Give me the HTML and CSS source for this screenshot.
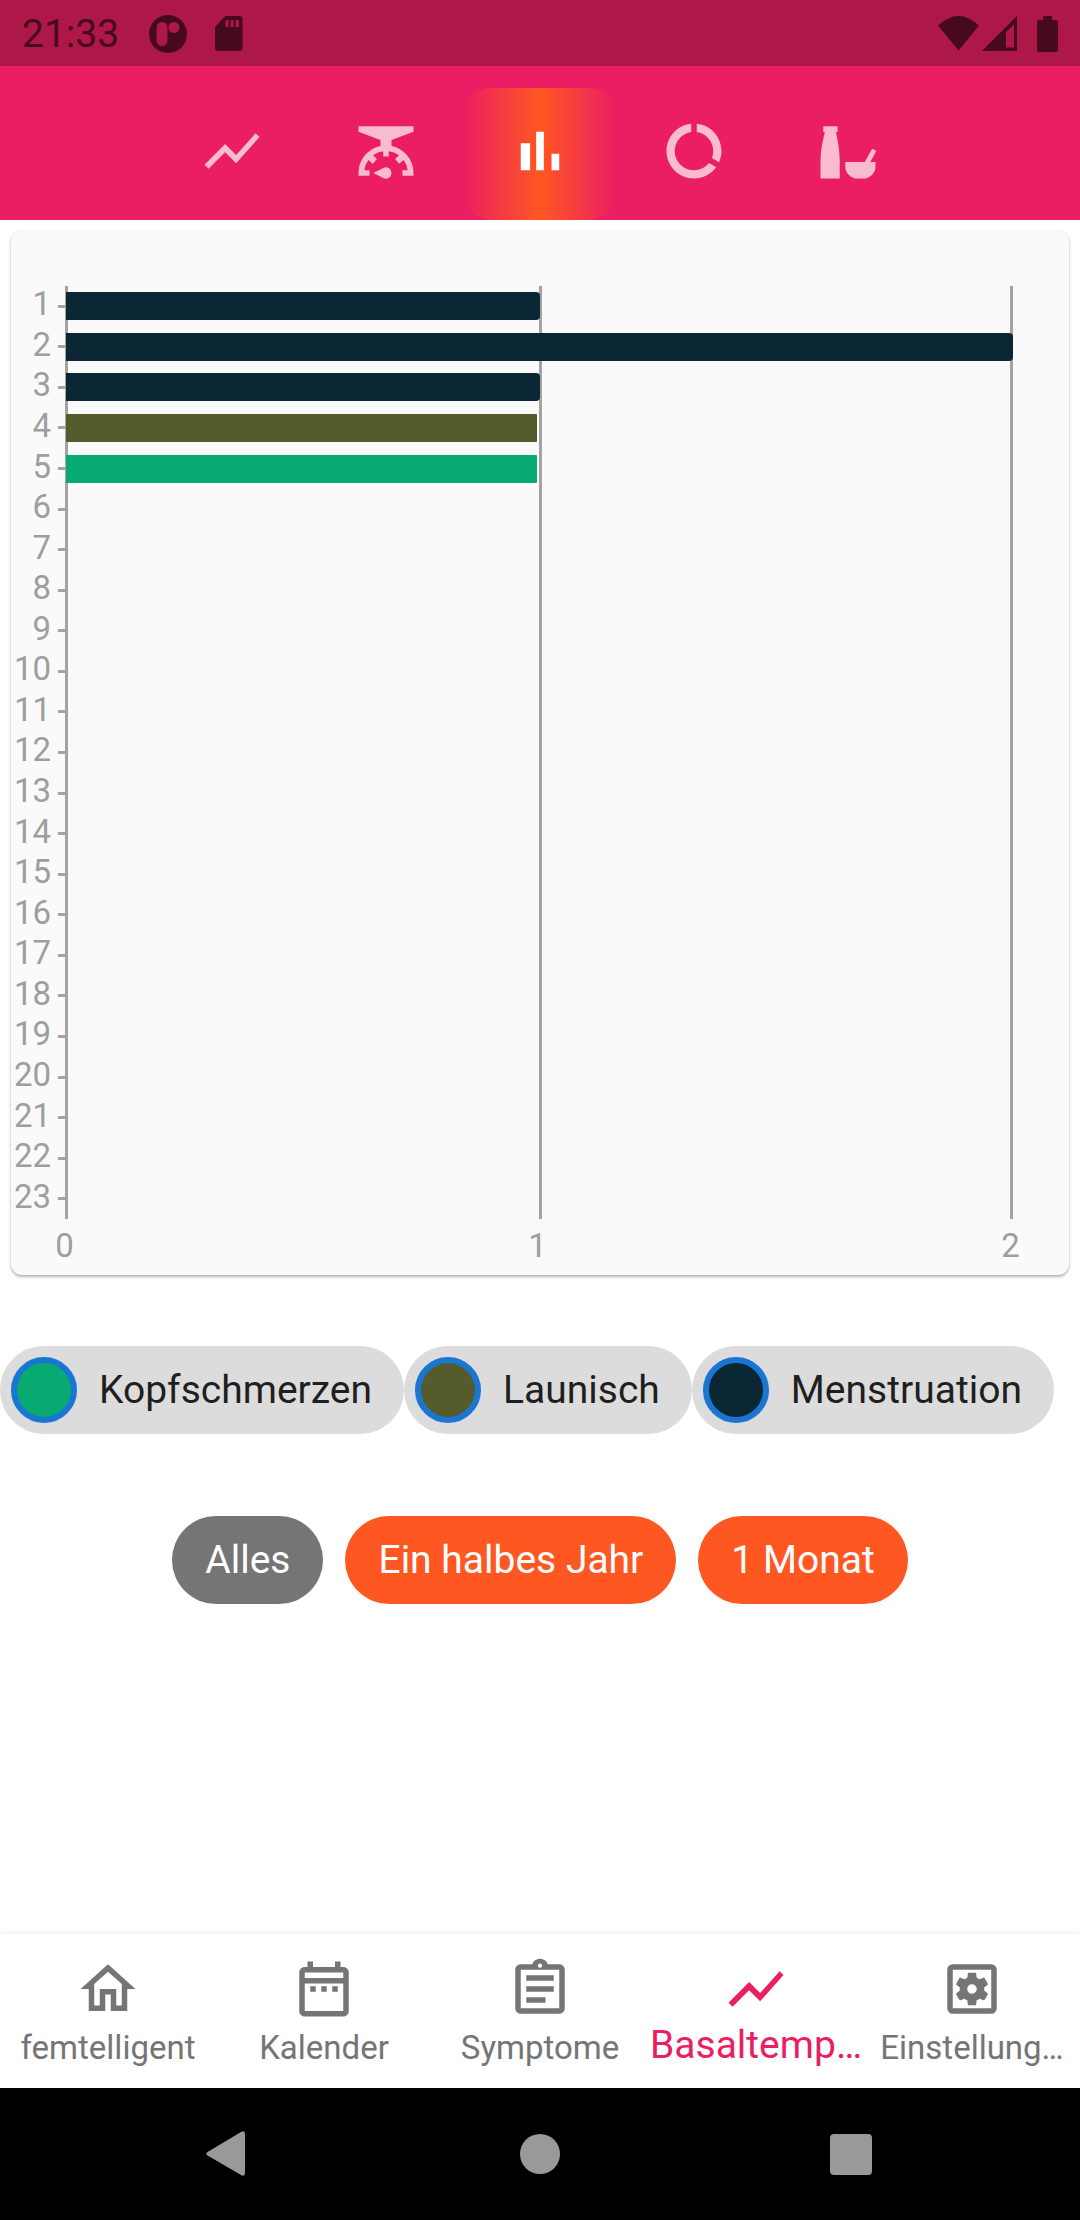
FILE: index.html
```html
<!DOCTYPE html>
<html lang="de">
<head>
<meta charset="utf-8">
<meta name="viewport" content="width=device-width, initial-scale=1">
<title>femtelligent</title>
<link rel="stylesheet" href="styles.css">
</head>
<body>
<div class="status">
  <span class="status-time">21:33</span>
  <svg class="status-app" viewBox="0 0 38 38" aria-hidden="true"><path fill-rule="evenodd" d="M19 0a19 19 0 1 0 0 38a19 19 0 0 0 0-38zM13 7a5.5 5.5 0 0 1 5.500 5.500v13a5.500 5.500 0 0 1-11 0v-13a5.500 5.500 0 0 1 5.500-5.500zM25 7a5.500 5.500 0 1 1 0 11a5.500 5.500 0 0 1 0-11z"/></svg>
  <svg class="status-sd" viewBox="0 0 28 35" aria-hidden="true"><path fill-rule="evenodd" d="M10.500 0H24.500a3 3 0 0 1 3 3V32a3 3 0 0 1-3 3H3a3 3 0 0 1-3-3V11zM10.500 4v7h3V4zm5 0v7h3V4zm5 0v7h3.500V4z"/></svg>
  <svg class="status-system" viewBox="0 0 120 36" aria-hidden="true">
    <path d="M0 9.500Q20.500-9.500 41 9.500L20.500 34.500z"/>
    <path fill-rule="evenodd" d="M79 0V35H44zM76 8.500L68 16V31.500H76z"/>
    <path d="M105 0h9v4h4a2 2 0 0 1 2 2V34a2 2 0 0 1-2 2H101a2 2 0 0 1-2-2V6a2 2 0 0 1 2-2h4z"/>
  </svg>
</div>
<header class="toolbar">
  <div class="tabs" role="tablist">
    <button class="tab" role="tab" aria-label="Verlauf"><svg class="icon" viewBox="0 0 24 24"><path d="M3.500 18.490l6-6.010 4 4L22 6.920l-1.410-1.410-7.090 7.970-4-4L2 16.990z"/></svg></button>
    <button class="tab" role="tab" aria-label="Gewicht"><svg class="icon" viewBox="0 0 24 24"><path d="M2 3h20v2l-8 3v2.200A10 10 0 0 1 22 20v1h-4v-2h1.900a8 8 0 0 0-1.500-3.700l-1.600 1.300-1.500-1.700 1.400-1.400A8 8 0 0 0 13 12.100V14h-2v-1.900a8 8 0 0 0-3.700 1.400l1.400 1.400-1.500 1.700-1.600-1.300A8 8 0 0 0 4.100 19H6v2H2v-1A10 10 0 0 1 10 10.200V8L2 5z"/><path d="M7.400 20l3.800-1.900a2.050 2.050 0 1 1 0 3.800z"/></svg></button>
    <button class="tab tab-active" role="tab" aria-selected="true" aria-label="Statistik"><svg class="icon" viewBox="0 0 24 24"><path d="M5 9.200h3.400V19H5zM10.600 5h2.800v14h-2.800zM16.200 13H19v6h-2.800z"/></svg></button>
    <button class="tab" role="tab" aria-label="Anteile"><svg class="icon" viewBox="0 0 24 24"><path d="M13 2.050v3.030c3.390.49 6 3.390 6 6.920 0 .9-.18 1.750-.48 2.540l2.600 1.530c.56-1.240.88-2.620.88-4.070 0-5.180-3.950-9.450-9-9.950zM12 19c-3.870 0-7-3.130-7-7 0-3.530 2.610-6.430 6-6.920V2.050c-5.060.5-9 4.760-9 9.950 0 5.520 4.470 10 9.990 10 3.310 0 6.240-1.610 8.060-4.090l-2.600-1.530C16.170 17.980 14.210 19 12 19z"/></svg></button>
    <button class="tab" role="tab" aria-label="Ernährung"><svg class="icon" viewBox="0 0 24 24"><path d="M3 3h5.200v2.100h-.6Q9 11 9 16v6H2v-6Q2 11 3.600 5.100H3zM11 16h7.100l2.700-4.800 1.500.8-2.200 4H22v1.500a4.500 4.500 0 0 1-4.500 4.500h-2A4.500 4.500 0 0 1 11 17.500z"/></svg></button>
  </div>
</header>
<main class="content">
  <section class="card" aria-label="Symptome pro Zyklustag">
    <div class="plot">
      <div class="gridlines" aria-hidden="true"><span></span><span></span></div>
      <ol class="rows">
        <li class="row"><span class="day">1</span><span class="track"><span class="bar bar-menstruation" style="width:50%"></span></span></li>
        <li class="row"><span class="day">2</span><span class="track"><span class="bar bar-menstruation" style="width:100%"></span></span></li>
        <li class="row"><span class="day">3</span><span class="track"><span class="bar bar-menstruation" style="width:50%"></span></span></li>
        <li class="row"><span class="day">4</span><span class="track"><span class="bar bar-launisch" style="width:49.700%"></span></span></li>
        <li class="row"><span class="day">5</span><span class="track"><span class="bar bar-kopfschmerzen" style="width:49.700%"></span></span></li>
        <li class="row"><span class="day">6</span></li>
        <li class="row"><span class="day">7</span></li>
        <li class="row"><span class="day">8</span></li>
        <li class="row"><span class="day">9</span></li>
        <li class="row"><span class="day">10</span></li>
        <li class="row"><span class="day">11</span></li>
        <li class="row"><span class="day">12</span></li>
        <li class="row"><span class="day">13</span></li>
        <li class="row"><span class="day">14</span></li>
        <li class="row"><span class="day">15</span></li>
        <li class="row"><span class="day">16</span></li>
        <li class="row"><span class="day">17</span></li>
        <li class="row"><span class="day">18</span></li>
        <li class="row"><span class="day">19</span></li>
        <li class="row"><span class="day">20</span></li>
        <li class="row"><span class="day">21</span></li>
        <li class="row"><span class="day">22</span></li>
        <li class="row"><span class="day">23</span></li>
      </ol>
    </div>
    <div class="scale"><span>0</span><span>1</span><span>2</span></div>
  </section>
  <ul class="legend">
    <li class="chip"><span class="dot bar-kopfschmerzen"></span>Kopfschmerzen</li>
    <li class="chip"><span class="dot bar-launisch"></span>Launisch</li>
    <li class="chip"><span class="dot bar-menstruation"></span>Menstruation</li>
  </ul>
  <div class="periods">
    <button class="period period-active" aria-pressed="true">Alles</button>
    <button class="period">Ein halbes Jahr</button>
    <button class="period">1 Monat</button>
  </div>
</main>
<nav class="bottom-nav">
  <a class="nav-item" href="#home"><svg class="icon" viewBox="0 0 24 24" aria-hidden="true"><path d="M12 5.690l5 4.500V18h-2v-6H9v6H7v-7.810l5-4.500M12 3L2 12h3v8h6v-6h2v6h6v-8h3L12 3z"/></svg><span class="nav-label">femtelligent</span></a>
  <a class="nav-item" href="#kalender"><svg class="icon" viewBox="0 0 24 24" aria-hidden="true"><path d="M7 11h2v2H7v-2zm14-5v14c0 1.100-.9 2-2 2H5c-1.110 0-2-.9-2-2l.01-14c0-1.100.88-2 1.990-2h1V2h2v2h8V2h2v2h1c1.100 0 2 .9 2 2zM5 8h14V6H5v2zm14 12V10H5v10h14zm-4-7h2v-2h-2v2zm-4 0h2v-2h-2v2z"/></svg><span class="nav-label">Kalender</span></a>
  <a class="nav-item" href="#symptome"><svg class="icon" viewBox="0 0 24 24" aria-hidden="true"><path d="M7 15h7v2H7zm0-4h10v2H7zm0-4h10v2H7zm12-4h-4.180C14.400 1.840 13.300 1 12 1c-1.300 0-2.400.84-2.820 2H5c-1.100 0-2 .9-2 2v14c0 1.100.9 2 2 2h14c1.100 0 2-.9 2-2V5c0-1.100-.9-2-2-2zm-7-.25c.41 0 .75.34.75.75s-.34.75-.75.75-.75-.34-.75-.75.34-.75.75-.75zM19 19H5V5h14v14z"/></svg><span class="nav-label">Symptome</span></a>
  <a class="nav-item nav-active" href="#basaltemperatur" aria-current="page"><svg class="icon" viewBox="0 0 24 24" aria-hidden="true"><path d="M3.500 18.490l6-6.010 4 4L22 6.920l-1.410-1.410-7.090 7.970-4-4L2 16.990z"/></svg><span class="nav-label">Basaltemp…</span></a>
  <a class="nav-item" href="#einstellungen"><svg class="icon" viewBox="0 0 24 24" aria-hidden="true"><path fill-rule="evenodd" d="M5 3h14a2 2 0 0 1 2 2v14a2 2 0 0 1-2 2H5a2 2 0 0 1-2-2V5a2 2 0 0 1 2-2zM5 5v14h14V5z"/><path fill-rule="evenodd" transform="translate(4.560 4.560) scale(.62)" d="M19.140 12.940c.04-.3.060-.61.060-.94 0-.32-.02-.64-.07-.94l2.030-1.580c.18-.14.23-.41.12-.61l-1.920-3.320c-.12-.22-.37-.29-.59-.22l-2.390.96c-.5-.38-1.030-.7-1.620-.94l-.36-2.540c-.04-.24-.24-.41-.48-.41h-3.840c-.24 0-.43.17-.47.41l-.36 2.540c-.59.24-1.130.57-1.620.94l-2.390-.96c-.22-.08-.47 0-.59.22L2.740 8.870c-.12.21-.08.47.12.61l2.030 1.580c-.05.3-.09.63-.09.94s.02.64.07.94l-2.030 1.580c-.18.14-.23.41-.12.61l1.920 3.320c.12.22.37.29.59.22l2.390-.96c.5.38 1.030.7 1.620.94l.36 2.540c.05.24.24.41.48.41h3.840c.24 0 .44-.17.47-.41l.36-2.540c.59-.24 1.130-.56 1.620-.94l2.390.96c.22.08.47 0 .59-.22l1.920-3.320c.12-.22.07-.47-.12-.61l-2.010-1.580zM12 14.800a2.800 2.800 0 1 1 0-5.600 2.800 2.800 0 0 1 0 5.600z"/></svg><span class="nav-label">Einstellung…</span></a>
</nav>
<div class="system-nav">
  <button class="system-key" aria-label="Zurück"><svg viewBox="0 0 60 60"><path d="M7.500 28L41 8Q45 6 45 10V49Q45 53 41 51L7.500 31.500Q5 29.800 7.500 28z"/></svg></button>
  <button class="system-key" aria-label="Startbildschirm"><svg viewBox="0 0 60 60"><circle cx="30" cy="30" r="20"/></svg></button>
  <button class="system-key" aria-label="Übersicht"><svg viewBox="0 0 60 60"><rect x="10" y="10" width="42" height="41" rx="4"/></svg></button>
</div>
</body>
</html>
```
FILE: styles.css
```css
* {
  box-sizing: border-box;
}

body {
  margin: 0;
  min-height: 100vh;
  display: flex;
  flex-direction: column;
  background: #fff;
  font-family: Roboto, "Noto Sans", sans-serif;
}

button {
  border: 0;
  margin: 0;
  font: inherit;
  cursor: pointer;
}

ol,
ul {
  list-style: none;
  margin: 0;
  padding: 0;
}

svg {
  display: block;
  fill: currentColor;
}

.icon {
  width: 66px;
  height: 66px;
}

/* status bar */
.status {
  display: flex;
  align-items: center;
  height: 66px;
  padding: 1px 22px 0;
  background: #ad1848;
  color: #46091d;
}

.status-time {
  font-size: 39px;
  line-height: 46px;
}

.status-app {
  width: 38px;
  height: 38px;
  margin-left: 30px;
}

.status-sd {
  width: 28px;
  height: 35px;
  margin-left: 28px;
}

.status-system {
  width: 120px;
  height: 36px;
  margin-left: auto;
}

/* tab bar */
.toolbar {
  padding-top: 22px;
  background: #eb1e63;
}

.tabs {
  display: flex;
  justify-content: center;
}

.tab {
  padding: 30px 44px 36px;
  background: none;
  color: #f9bbd0;
}

.tab-active {
  border-radius: 28px;
  background: linear-gradient(90deg, #eb1e63, #ff5722, #eb1e63);
  color: #fff;
}

/* chart */
.content {
  flex: 1;
}

.card {
  margin: 11px;
  padding: 55px 56px 11px 0;
  border-radius: 11px;
  background: #fafafa;
  box-shadow: 0 2px 3px rgba(0, 0, 0, 0.28), 0 0 2px rgba(0, 0, 0, 0.12);
  color: #9e9e9e;
  font-size: 33px;
  line-height: 36px;
}

.plot {
  display: grid;
  grid-template-columns: 54px 1fr;
  height: 933px;
}

.gridlines {
  grid-area: 1 / 2;
  display: grid;
  grid-template-columns: 1fr 1fr;
}

.gridlines span {
  border-left: 3px solid #a3a3a3;
}

.gridlines span:last-child {
  border-right: 3px solid #a3a3a3;
}

.rows {
  grid-area: 1 / 1 / 2 / 3;
  display: grid;
  grid-template-rows: repeat(23, 1fr);
}

/* day label, gap, tick mark, bar */
.row {
  display: grid;
  grid-template-columns: 40px 7px 8px 1fr;
  align-items: center;
}

.row::before {
  content: "";
  grid-area: 1 / 3;
  height: 3px;
  background: #a3a3a3;
}

.day {
  grid-area: 1 / 1;
  padding-bottom: 4px;
  text-align: right;
}

.track {
  grid-area: 1 / 4;
}

.bar {
  display: block;
  height: 28px;
  border-radius: 0 4px 4px 0;
}

.bar-menstruation {
  background: #0a2733;
}

.bar-launisch {
  background: #565b2d;
}

.bar-kopfschmerzen {
  background: #09aa71;
}

.bar.bar-launisch,
.bar.bar-kopfschmerzen {
  border-radius: 0 1px 1px 0;
}

.scale {
  display: flex;
  justify-content: space-between;
  margin: 9px -7px 0 44px;
}

.scale span {
  width: 19px;
  text-align: center;
}

/* legend */
.legend {
  display: flex;
  margin-top: 71px;
}

.chip {
  display: flex;
  align-items: center;
  gap: 22px;
  height: 88px;
  padding: 0 32px 0 11px;
  border-radius: 44px;
  background: #dcdcdc;
  color: #1f1f1f;
  font-size: 39px;
  line-height: 46px;
  white-space: nowrap;
}

.dot {
  width: 66px;
  height: 66px;
  border: 6px solid #1976d2;
  border-radius: 50%;
}

/* period filter */
.periods {
  display: flex;
  justify-content: center;
  gap: 22px;
  margin-top: 82px;
}

.period {
  height: 88px;
  padding: 0 33px;
  border-radius: 44px;
  background: #ff5722;
  color: #fff;
  font-size: 39px;
  line-height: 46px;
}

.period-active {
  background: #757575;
}

/* bottom navigation */
.bottom-nav {
  display: grid;
  grid-template-columns: repeat(5, 1fr);
  height: 154px;
  background: #fff;
  box-shadow: 0 -1px 6px rgba(0, 0, 0, 0.08);
}

.nav-item {
  display: flex;
  flex-direction: column;
  align-items: center;
  padding-top: 22px;
  color: #757575;
  font-size: 33px;
  line-height: 52px;
  text-decoration: none;
  white-space: nowrap;
}

.nav-active {
  color: #eb1e63;
  font-size: 39px;
  line-height: 46px;
}

/* system navigation */
.system-nav {
  display: grid;
  grid-template-columns: repeat(3, 1fr);
  justify-items: center;
  height: 132px;
  padding: 0 75px;
  background: #000;
}

.system-key {
  padding: 36px;
  background: none;
  color: #999;
}

.system-key svg {
  width: 60px;
  height: 60px;
}
```
